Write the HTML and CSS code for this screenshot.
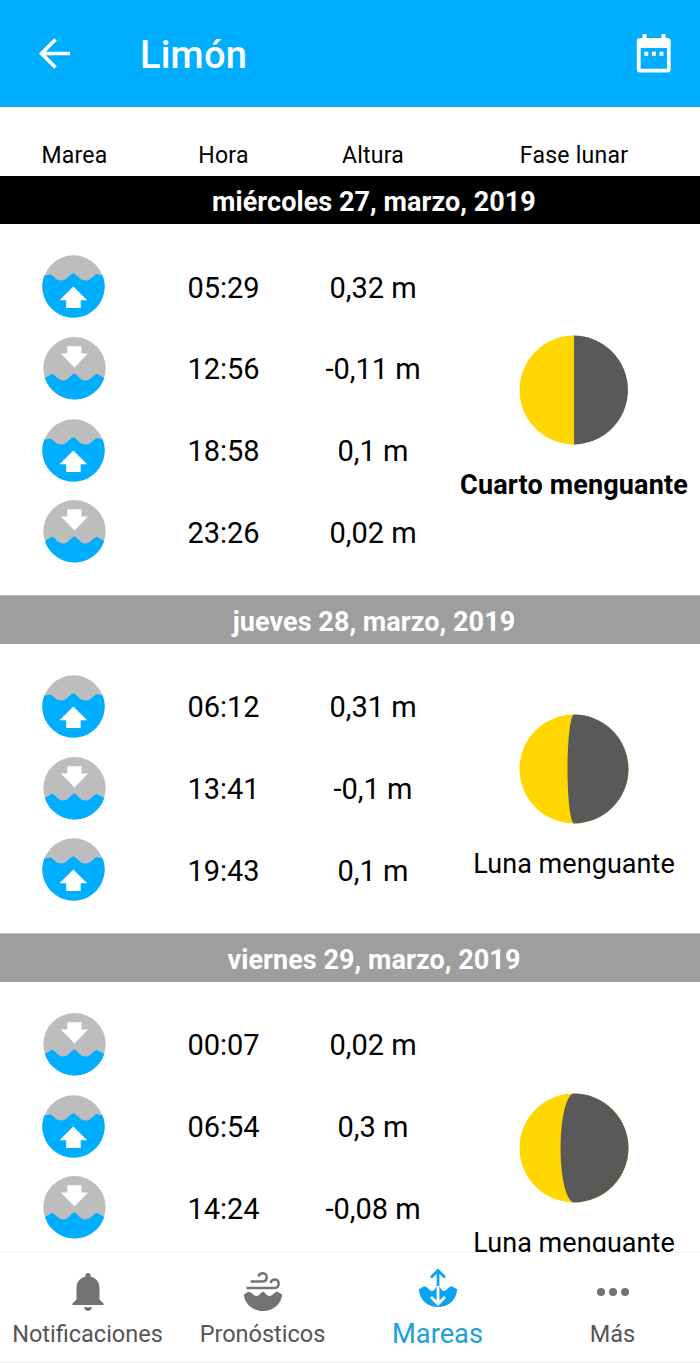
FILE: index.html
```html
<!DOCTYPE html>
<html lang="es">
<head>
<meta charset="utf-8">
<title>Limón – Mareas</title>
<link rel="stylesheet" href="styles.css">
</head>
<body>
<svg class="sprite" aria-hidden="true">
  <symbol id="rising" viewBox="0 0 64 64">
    <circle cx="31.5" cy="31.3" r="31" fill="#bdbdbd"/>
    <path fill="#00aeff" d="M2.300 20.500L8.500 19.500C12 21.500 14.500 25.500 19 25.500C24.500 25.500 27 20 31.300 18.200C35.600 20 38 25.500 43.700 25.500C48 25.500 50.500 21.800 54.500 19L60.700 20.500A31.200 31.200 0 1 1 2.300 20.500Z"/>
    <path fill="#fff" d="M31.300 31.500L45.200 45.300H38.700V53H24.200V45.300H17.500Z"/>
  </symbol>
  <symbol id="falling" viewBox="0 0 64 64">
    <circle cx="31.500" cy="31.300" r="31.200" fill="#bdbdbd"/>
    <path fill="#00aeff" d="M1.900 41L9 36.800C12.500 38 15 43.500 20.200 43.500C25.400 43.500 27.500 38 31.300 36.200C35 38 37.200 43.500 42.500 43.500C47.700 43.500 50 38 53.800 36.800L61.200 41A31.200 31.200 0 0 1 1.900 41Z"/>
    <path fill="#fff" d="M24.300 9.200H38.500V16.500H45L31.500 30.500L17.800 16.500H24.300Z"/>
  </symbol>
</svg>
<div class="app">
  <header class="topbar">
    <svg class="back" viewBox="0 0 32 32"><path d="M31 15.500H3M16.500 1.500L2.500 15.500L16.500 29.500" fill="none" stroke="#fff" stroke-width="3.700"/></svg>
    <h1 class="title">Limón</h1>
    <svg class="calendar" viewBox="0 0 36 40"><path fill="#fff" fill-rule="evenodd" d="M6.500 0H10.500V4H25.500V0H29.500V4H31.500Q34.700 4 34.700 7.200V35.300Q34.700 38.500 31.500 38.500H4Q.800 38.500 .800 35.300V7.200Q.800 4 4 4H6.500ZM4.700 14V34.700H31V14ZM8.300 17.700H12.300V21.700H8.300ZM15.900 17.700H19.900V21.700H15.900ZM23.500 17.700H27.500V21.700H23.500Z"/></svg>
  </header>
  <div class="columns"><span>Marea</span><span>Hora</span><span>Altura</span><span>Fase lunar</span></div>
  <main class="days">
    <h2 class="date today">miércoles 27, marzo, 2019</h2>
    <section class="day">
      <div class="tides">
        <div class="tide"><svg class="up"><use href="#rising"/></svg><span>05:29</span><span>0,32 m</span></div>
        <div class="tide"><svg class="down"><use href="#falling"/></svg><span>12:56</span><span>-0,11 m</span></div>
        <div class="tide"><svg class="up"><use href="#rising"/></svg><span>18:58</span><span>0,1 m</span></div>
        <div class="tide"><svg class="down"><use href="#falling"/></svg><span>23:26</span><span>0,02 m</span></div>
      </div>
      <div class="phase">
        <svg class="moon" viewBox="0 0 110 110"><path fill="#595959" d="M54.500 .500A54.500 54.500 0 0 1 54.500 109.500Z"/><path fill="#ffd600" d="M55 .500A54.500 54.500 0 0 0 55 109.500Z"/></svg>
        <strong class="label quarter">Cuarto menguante</strong>
      </div>
    </section>
    <h2 class="date">jueves 28, marzo, 2019</h2>
    <section class="day">
      <div class="tides">
        <div class="tide"><svg class="up"><use href="#rising"/></svg><span>06:12</span><span>0,31 m</span></div>
        <div class="tide"><svg class="down"><use href="#falling"/></svg><span>13:41</span><span>-0,1 m</span></div>
        <div class="tide"><svg class="up"><use href="#rising"/></svg><span>19:43</span><span>0,1 m</span></div>
      </div>
      <div class="phase">
        <svg class="moon" viewBox="0 0 110 110"><circle cx="55" cy="55" r="54.500" fill="#ffd600"/><path fill="#595959" d="M55 .500A54.500 54.500 0 0 1 55 109.500A6.500 54.500 0 0 1 55 .500Z"/></svg>
        <span class="label">Luna menguante</span>
      </div>
    </section>
    <h2 class="date">viernes 29, marzo, 2019</h2>
    <section class="day long">
      <div class="tides">
        <div class="tide"><svg class="down"><use href="#falling"/></svg><span>00:07</span><span>0,02 m</span></div>
        <div class="tide"><svg class="up"><use href="#rising"/></svg><span>06:54</span><span>0,3 m</span></div>
        <div class="tide"><svg class="down"><use href="#falling"/></svg><span>14:24</span><span>-0,08 m</span></div>
      </div>
      <div class="phase">
        <svg class="moon" viewBox="0 0 110 110"><circle cx="55" cy="55" r="54.500" fill="#ffd600"/><path fill="#595959" d="M55 .500A54.500 54.500 0 0 1 55 109.500A13.500 54.500 0 0 1 55 .500Z"/></svg>
        <span class="label">Luna menguante</span>
      </div>
    </section>
  </main>
  <nav class="tabs">
    <div class="tab">
      <svg viewBox="0 0 40 44"><path fill="#737373" d="M20 3C22 3 22.800 4.500 22.800 6.800C28 8 31.500 12 31.500 18V29.500L35.500 33.500V35H4.500V33.500L8.500 29.500V18C8.500 12 12 8 17.200 6.800C17.200 4.500 18 3 20 3ZM16 37.200H24C23.500 39.500 22 41 20 41C18 41 16.500 39.500 16 37.200Z"/></svg>
      <span>Notificaciones</span>
    </div>
    <div class="tab">
      <svg viewBox="0 0 40 44"><path fill="none" stroke="#737373" stroke-width="2.400" d="M7.500 11.500H19.500C25 11.500 25 3.300 20 3.300C17.500 3.300 16 4.500 15.500 6.500M3.500 18H31.500C37 18 37 9.500 32 9.500C29.500 9.500 28 11 27.700 13"/><path fill="#737373" d="M.800 24.500C3.500 23.500 4 21.800 6.500 21.800C9 22.500 10.500 26 13.500 26C16.500 26 17.500 22.500 20 21.500C22.500 22.500 23.500 26 26.500 26C29.500 26 31 22.500 33.500 21.800C36 21.800 36.500 23.500 39.200 24.500C38.500 33.500 30.500 41 20 41C9.500 41 1.500 33.500 .800 24.500Z"/></svg>
      <span>Pronósticos</span>
    </div>
    <div class="tab active">
      <svg viewBox="0 0 40 44"><path fill="#0aa5ee" d="M.800 20.200C3.500 19.500 4 17.500 7 17.500C10 17.500 11 22 14 22C17 22 17.500 17 20 17C22.500 17 23 22 26 22C29 22 30 17.500 33 17.500C36 17.500 36.500 19.500 39.200 20.200C38.500 31 30.500 38 20 38C9.500 38 1.500 31 .800 20.200Z"/><path fill="none" stroke="#0aa5ee" stroke-width="2.800" d="M20 18V1.500M13 8.500L20 1.500L27 8.500"/><path fill="none" stroke="#fff" stroke-width="2.800" d="M20 17V35M13 28L20 35L27 28"/></svg>
      <span>Mareas</span>
    </div>
    <div class="tab">
      <svg viewBox="0 0 40 44"><g fill="#737373"><circle cx="8" cy="22" r="4"/><circle cx="20" cy="22" r="4"/><circle cx="32" cy="22" r="4"/></g></svg>
      <span>Más</span>
    </div>
  </nav>
</div>
</body>
</html>
```
FILE: styles.css
```css
* { box-sizing: border-box; }
body { margin: 0; background: #fff; color: #000; font-family: Roboto, sans-serif; }
.sprite { display: none; }
.app { width: 700px; height: 1363px; display: flex; flex-direction: column; overflow: hidden; }
.topbar { flex: none; height: 107px; background: #00aeff; display: flex; align-items: center; padding: 2px 28px 0 39px; border-bottom: 1px solid #129fe3; }
.back { width: 32px; height: 32px; }
.title { margin: 2px 0 0 69px; color: #fff; font-size: 38px; font-weight: 500; letter-spacing: .2px; line-height: 48px; }
.calendar { width: 36px; height: 40px; margin-left: auto; }
.columns { flex: none; height: 69px; display: grid; grid-template-columns: 149px 149px 150px 252px; text-align: center; font-size: 23px; line-height: 28px; letter-spacing: .25px; padding-top: 35px; }
.days { flex: 1; min-height: 0; overflow: hidden; }
.date { margin: 0; height: 49px; padding-left: 48px; background: #9e9e9e; border-top: 1px solid #c4c4c4; color: #fff; font-size: 27px; font-weight: 700; line-height: 52px; letter-spacing: .05px; text-align: center; }
.today { height: 48px; background: #000; border: 0; }
.day { display: grid; grid-template-columns: 448px 252px; }
.long { min-height: 371px; }
.tides { padding: 22.3px 0 21.7px; }
.tide { display: grid; grid-template-columns: 149px 149px 150px; height: 81.7px; align-items: center; text-align: center; font-size: 29px; }
.tide span { padding-top: 1px; }
.tide svg { width: 64px; height: 64px; margin-left: 42px; }
.tide .down { margin-left: 43px; }
.phase { display: flex; flex-direction: column; align-items: center; justify-content: center; padding-top: 16px; }
.moon { width: 110px; height: 110px; flex: none; }
.label { margin-top: 25px; line-height: 30px; font-size: 27px; white-space: nowrap; letter-spacing: .05px; }
.quarter { font-weight: 700; letter-spacing: .15px; }
.tabs { flex: none; height: 111px; background: #fff; border-top: 1px solid #f5f5f5; border-bottom: 1px solid #eee; display: grid; grid-template-columns: repeat(4, 175px); }
.tab { display: flex; flex-direction: column; align-items: center; padding: 17px 0 0 0; color: #555; font-size: 23.5px; line-height: 30px; }
.tab svg { width: 40px; height: 44px; margin-bottom: 5px; }
.active { color: #1ba0d8; font-size: 27.3px; }
.active svg { margin-top: -1px; margin-bottom: 6px; }
```
